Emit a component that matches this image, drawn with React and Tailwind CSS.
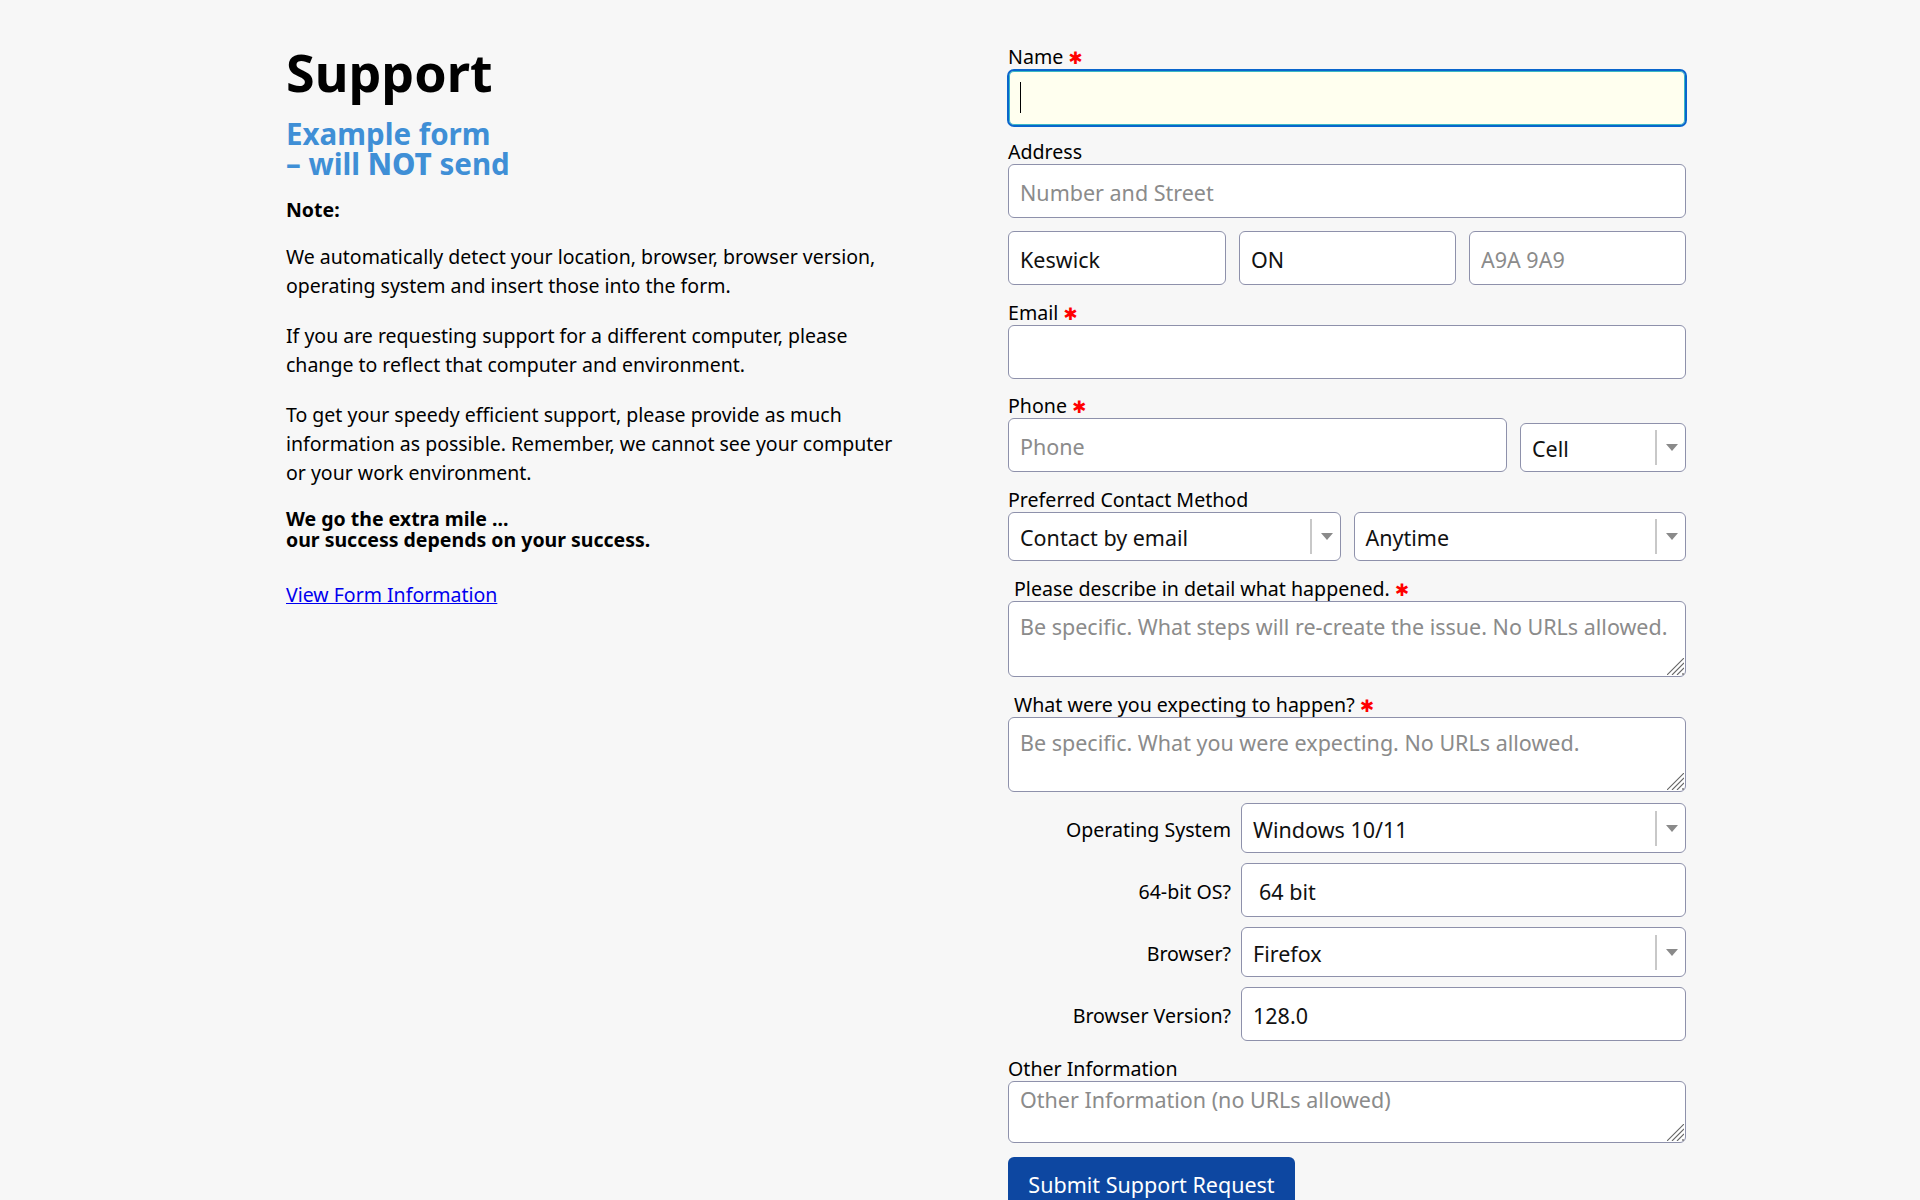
import React from "react";

function Star() {
  return <span className="ml-[5px] text-[#ff0000] text-[17px] leading-none font-['DejaVu_Sans',sans-serif]">✱</span>;
}

function Label({ children, star, indent }) {
  return (
    <label className={`block h-[23px] leading-[21px] text-[19.6px] text-black ${indent ? "pl-[6px]" : ""}`}>
      {children}
      {star && <Star />}
    </label>
  );
}

function Field({ placeholder, value, className = "" }) {
  return (
    <input
      readOnly
      placeholder={placeholder}
      defaultValue={value}
      className={`block w-full h-[54px] px-[11px] pt-[2px] bg-white border border-[#8e91ab] rounded-[6px] text-[21.5px] text-[#111] placeholder:text-[#8b8b8b] outline-none ${className}`}
    />
  );
}

function Grip() {
  return (
    <svg className="absolute right-[2px] bottom-[2px]" width="17" height="17" viewBox="0 0 17 17" fill="none" stroke="#666" strokeWidth="1.1">
      <path d="M17 0 0 17M17 5 5 17M17 10 10 17" />
      <path d="M15.5 15.5h1v1h-1z" strokeWidth="0.8" />
    </svg>
  );
}

function Area({ placeholder, className = "" }) {
  return (
    <div className="relative">
      <textarea
        readOnly
        placeholder={placeholder}
        className={`block w-full px-[11px] pt-[11px] bg-white border border-[#8e91ab] rounded-[6px] text-[21.5px] leading-[28px] text-[#111] placeholder:text-[#8b8b8b] outline-none resize-none ${className}`}
      />
      <Grip />
    </div>
  );
}

function Select({ value, className = "" }) {
  return (
    <div className={`flex items-center h-[49px] pl-[11px] pr-[7px] bg-white border border-[#8e91ab] rounded-[6px] ${className}`}>
      <span className="flex-1 pt-[4px] text-[21.5px] text-[#111]">{value}</span>
      <span className="w-[2px] h-[35px] bg-[#c8c8c8]" />
      <span className="ml-[9px] w-0 h-0 border-x-[6px] border-x-transparent border-t-[7px] border-t-[#8a8a8a]" />
    </div>
  );
}

function Row({ label, children, className = "" }) {
  return (
    <div className={`grid grid-cols-[223px_1fr] gap-x-[10px] items-center ${className}`}>
      <label className="pt-[3px] text-right text-[19.6px] text-black">{label}</label>
      {children}
    </div>
  );
}

export default function App() {
  return (
    <div className="h-screen overflow-hidden bg-[#f7f7f7] text-black font-['Noto_Sans',sans-serif] flex pl-[286px]">
      {/* Left */}
      <div className="w-[722px] shrink-0 pt-[37px]">
        <h1 className="text-[52px] leading-[70px] font-bold">Support</h1>
        <h2 className="mt-[12px] text-[29.5px] leading-[30px] font-bold text-[#3f8fd6]">
          Example form
          <br />– will <span className="font-extrabold">NOT</span> send
        </h2>
        <p className="mt-[16px] text-[19.5px] leading-[29px] font-bold">Note:</p>
        <p className="mt-[18px] text-[19.5px] leading-[29px]">
          We automatically detect your location, browser, browser version,
          <br />
          operating system and insert those into the form.
        </p>
        <p className="mt-[21px] text-[19.5px] leading-[29px]">
          If you are requesting support for a different computer, please
          <br />
          change to reflect that computer and environment.
        </p>
        <p className="mt-[21px] text-[19.5px] leading-[29px]">
          To get your speedy efficient support, please provide as much
          <br />
          information as possible. Remember, we cannot see your computer
          <br />
          or your work environment.
        </p>
        <p className="mt-[21px] text-[19.5px] leading-[21px] font-bold">
          We go the extra mile ...
          <br />
          our success depends on your success.
        </p>
        <a href="#info" className="block mt-[30px] text-[19.5px] leading-[29px] text-[#0000ee] underline">
          View Form Information
        </a>
      </div>

      {/* Form */}
      <form className="w-[678px] shrink-0 pt-[46px]">
        <Label star>Name</Label>
        <div className="relative -mx-px">
          <input
            readOnly
            className="block w-full h-[58px] bg-[#ffffef] border-2 border-[#0a66cc] rounded-[7px] outline-none shadow-[inset_0_0_0_1px_#3bb8c4]"
          />
          <span className="absolute left-[13px] top-[13px] w-px h-[31px] bg-black" />
        </div>

        <div className="mt-[14px]">
          <Label>Address</Label>
          <Field placeholder="Number and Street" />
        </div>
        <div className="mt-[13px] grid grid-cols-[218px_1fr_1fr] gap-[13px]">
          <Field value="Keswick" />
          <Field value="ON" />
          <Field placeholder="A9A 9A9" />
        </div>

        <div className="mt-[17px]">
          <Label star>Email</Label>
          <Field />
        </div>

        <div className="mt-[16px]">
          <Label star>Phone</Label>
          <div className="flex items-end gap-[13px]">
            <Field placeholder="Phone" className="flex-1" />
            <Select value="Cell" className="w-[166px] shrink-0" />
          </div>
        </div>

        <div className="mt-[17px]">
          <Label>Preferred Contact Method</Label>
          <div className="grid grid-cols-2 gap-[13px]">
            <Select value="Contact by email" />
            <Select value="Anytime" />
          </div>
        </div>

        <div className="mt-[17px]">
          <Label star indent>Please describe in detail what happened.</Label>
          <Area placeholder="Be specific. What steps will re-create the issue. No URLs allowed." className="h-[76px]" />
        </div>

        <div className="mt-[17px]">
          <Label star indent>What were you expecting to happen?</Label>
          <Area placeholder="Be specific. What you were expecting. No URLs allowed." className="h-[75px]" />
        </div>

        <Row label="Operating System" className="mt-[11px]">
          <Select value="Windows 10/11" className="h-[50px]" />
        </Row>
        <Row label="64-bit OS?" className="mt-[10px]">
          <Field value="64 bit" className="pl-[17px]" />
        </Row>
        <Row label="Browser?" className="mt-[10px]">
          <Select value="Firefox" className="h-[50px]" />
        </Row>
        <Row label="Browser Version?" className="mt-[10px]">
          <Field value="128.0" />
        </Row>

        <div className="mt-[17px]">
          <Label>Other Information</Label>
          <Area placeholder="Other Information (no URLs allowed)" className="h-[62px] !pt-[4px]" />
        </div>

        <button type="button" className="mt-[14px] pt-[2px] w-[287px] h-[54px] bg-[#0d47a1] rounded-[6px] text-white text-[21.5px] text-center">
          Submit Support Request
        </button>
      </form>
    </div>
  );
}
